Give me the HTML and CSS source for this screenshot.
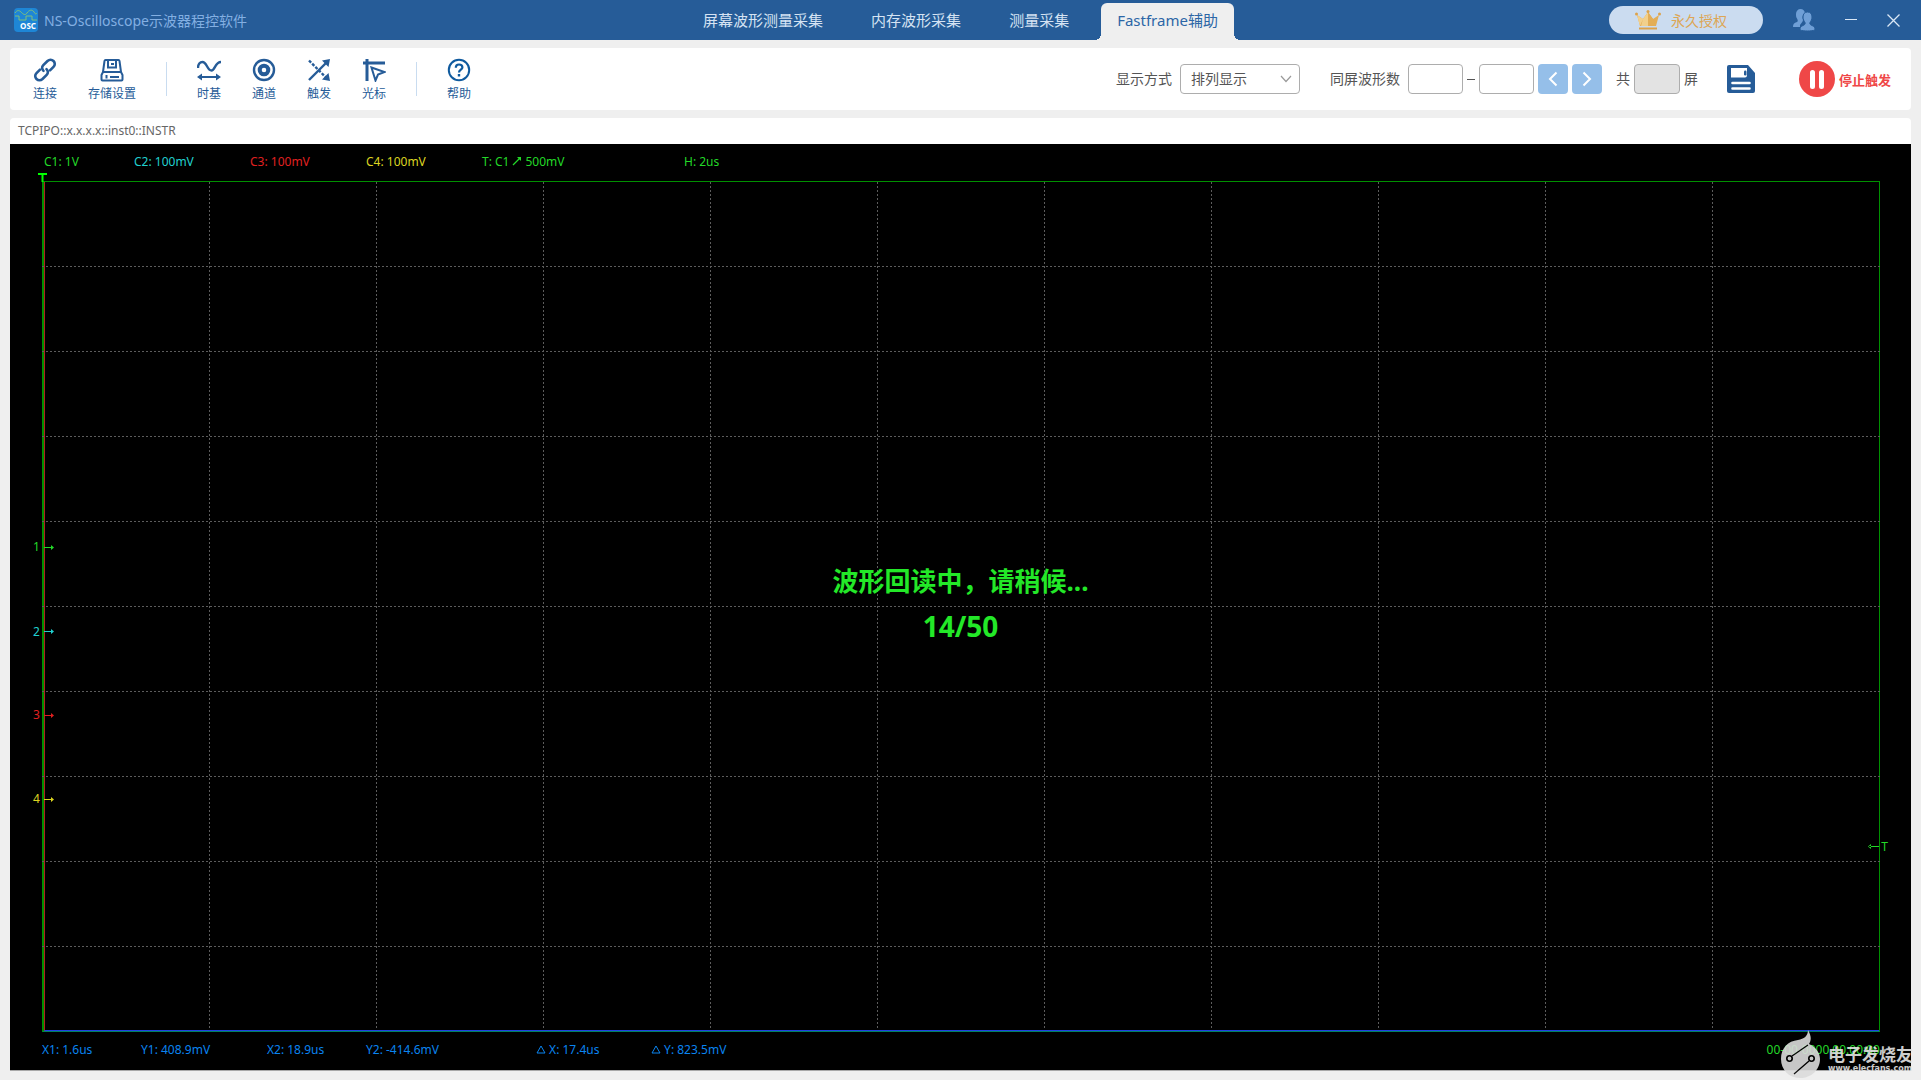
FILE: index.html
```html
<!DOCTYPE html>
<html lang="zh-CN">
	<head>
		<meta charset="UTF-8">
		<title>NS-Oscilloscope示波器程控软件</title>
		<link rel="stylesheet" href="styles.css">
	</head>
	<body>
		<!-- 顶部标题栏 -->
		<header class="top">
			<div class="brand">
				<svg class="logo" viewBox="0 0 24 24">
					<rect width="24" height="24" rx="4" fill="#1e86d6"/>
					<path d="M1 5C3 2 5 2 7 4S11 8 13 5S18 1 20 4S22 6 23 5" fill="none" stroke="#7fbf7a"/>
					<path d="M1 8H5V12H12V8H18V12H23" fill="none" stroke="#7fbf7a"/>
					<text x="14" y="21" class="logo-text">OSC</text>
				</svg>
				<span>NS-Oscilloscope示波器程控软件</span>
			</div>
			<nav class="tabs">
				<a href="#">屏幕波形测量采集</a>
				<a href="#">内存波形采集</a>
				<a href="#">测量采集</a>
				<a href="#" class="active">Fastframe辅助</a>
			</nav>
			<div class="win">
				<button class="license" type="button">
					<svg width="26" height="20" viewBox="0 0 26 20">
						<path d="M2 5L8 9L13 2L18 9L24 5L21 16H5Z" fill="#e3ae57"/>
						<path d="M2 5L8 9L5 16ZM13 2V16H6L8 9Z" fill="#f2d08c"/>
						<path d="M13 2L18 9L21 16H13Z" fill="#e3ae57"/>
						<circle cx="1.500" cy="4" r="1.500" fill="#dda24a"/>
						<circle cx="13" cy="1.500" r="1.500" fill="#dda24a"/>
						<circle cx="24.500" cy="4" r="1.500" fill="#dda24a"/>
						<path d="M4 18.500H22" stroke="#dda24a" stroke-width="2"/>
					</svg>
					<span>永久授权</span>
				</button>
				<button type="button" aria-label="用户">
					<svg width="22" height="22" viewBox="0 0 22 22" fill="#6f9fd6">
						<path d="M7.500 0C10 0 12 2 12 4.500C9.500 6 9 8 10 11C10 13 8 14 7 16V18H0C0 15 1 14 4 13C5 12.500 5 11.500 4 9.500C3 8 3 7 3 5C3 2 5 0 7.500 0Z"/>
						<path d="M14.500 3C17.500 3 19 5 19 8C19 10.500 18 12 17 13.500C16.500 15 17 15.500 19 16.500C21.500 17.500 22 18.500 22 21C19 22.300 10 22.300 7 21C7 18.500 7.500 17.500 10 16.500C12 15.500 12.500 15 12 13.500C11 12 10 10.500 10 8C10 5 11.500 3 14.500 3Z" stroke="#265c98"/>
					</svg>
				</button>
				<button type="button" aria-label="最小化">
					<svg width="12" height="12" viewBox="0 0 12 12"><path d="M0 5.500H12" stroke="#dbe8f6"/></svg>
				</button>
				<button type="button" aria-label="关闭">
					<svg width="13" height="13" viewBox="0 0 13 13"><path d="M.5 .5L12.500 12.500M12.500 .5L.5 12.500" stroke="#dbe8f6" stroke-width="1.300"/></svg>
				</button>
			</div>
		</header>

		<!-- 工具栏 -->
		<section class="toolbar">
			<div class="tools">
				<button class="tool" type="button">
					<svg viewBox="0 0 24 24" fill="none" stroke="#265c98" stroke-width="2.600" stroke-linecap="round">
						<path d="M10.500 12.800C8.700 11 8.700 8.800 10.300 7.200L14.500 3C16.300 1.300 18.800 1.300 20.500 3C22.200 4.700 22.200 7.200 20.500 8.900L17 12.400"/>
						<path d="M13.500 11.200C15.300 13 15.300 15.200 13.700 16.800L9.500 21C7.700 22.700 5.200 22.700 3.500 21C1.800 19.300 1.800 16.800 3.500 15.100L7 11.600"/>
					</svg>
					<span>连接</span>
				</button>
				<button class="tool" type="button">
					<svg viewBox="0 0 24 24" fill="none" stroke="#265c98" stroke-width="2">
						<path d="M3 14L4.500 3Q4.700 2 5.500 2H18.500Q19.300 2 19.500 3L21 14"/>
						<path d="M8 2V9.500H16V2M11 6H14"/>
						<path d="M3 14H21L22.500 17V21.500Q22.500 22.500 21.500 22.500H2.500Q1.500 22.500 1.500 21.500V17Z"/>
						<path d="M6.500 17V20.500M10 19H19"/>
					</svg>
					<span>存储设置</span>
				</button>
				<i class="line"></i>
				<button class="tool" type="button">
					<svg viewBox="0 0 24 24" fill="none" stroke="#265c98" stroke-width="2.400">
						<path d="M1 10C1 6 3 4 5.500 4C10 4 10 12.500 14.500 12.500C18 12.500 18 4 24 4"/>
						<path d="M3 19H21" stroke-width="2"/>
						<path d="M5 15.500V22.500L0 19ZM19 15.500V22.500L24 19Z" fill="#265c98" stroke="none"/>
					</svg>
					<span>时基</span>
				</button>
				<button class="tool" type="button">
					<svg viewBox="0 0 24 24" fill="none" stroke="#265c98">
						<circle cx="12" cy="12" r="10" stroke-width="2.400"/>
						<circle cx="12" cy="12" r="4.300" stroke-width="4"/>
					</svg>
					<span>通道</span>
				</button>
				<button class="tool" type="button">
					<svg viewBox="0 0 24 24" fill="none" stroke="#265c98" stroke-width="2.400">
						<path d="M2 22L19 5"/>
						<path d="M2 2.500L19 19.500" stroke-dasharray="3 1.500"/>
						<path d="M23 1L21.500 9L15 2.500ZM23 23L21.500 15L15 21.500Z" fill="#265c98" stroke="none"/>
					</svg>
					<span>触发</span>
				</button>
				<button class="tool" type="button">
					<svg viewBox="0 0 24 24" fill="none" stroke="#265c98">
						<path d="M5 1V23M1 5H23" stroke-width="3"/>
						<path d="M9.500 9.500L22.500 14L16 16.500L13.500 22.500Z" stroke-width="2"/>
					</svg>
					<span>光标</span>
				</button>
				<i class="line"></i>
				<button class="tool" type="button">
					<svg viewBox="0 0 24 24" fill="none" stroke="#0f5a9e">
						<circle cx="12" cy="12" r="10.200" stroke-width="2"/>
						<path d="M8.800 9.800C8.800 7.500 10 6.500 12 6.500S15.400 7.700 15.400 9.500C15.400 11.500 12 12 12 14.500" stroke-width="2.200"/>
						<path d="M12 16V18.500" stroke-width="2.400"/>
					</svg>
					<span>帮助</span>
				</button>
			</div>
			<form class="filter">
				<label for="mode">显示方式</label>
				<span class="select">
					<select id="mode"><option>排列显示</option></select>
					<svg width="12" height="8" viewBox="0 0 12 8"><path d="M1 1L6 6.500L11 1" fill="none" stroke="#9a9a9a" stroke-width="1.200"/></svg>
				</span>
				<label for="from" class="second">同屏波形数</label>
				<input id="from" class="num" type="text">
				<i class="dash"></i>
				<input class="num" type="text" aria-label="结束波形">
				<button class="page" type="button" aria-label="上一屏">
					<svg width="10" height="16" viewBox="0 0 10 16"><path d="M8.500 1.500L2 8L8.500 14.500" fill="none" stroke="#fff" stroke-width="2"/></svg>
				</button>
				<button class="page" type="button" aria-label="下一屏">
					<svg width="10" height="16" viewBox="0 0 10 16"><path d="M1.500 1.500L8 8L1.500 14.500" fill="none" stroke="#fff" stroke-width="2"/></svg>
				</button>
				<label for="total" class="total-label">共</label>
				<input id="total" class="num total" type="text" disabled>
				<label for="total">屏</label>
				<button class="save" type="button" aria-label="保存">
					<svg width="28" height="28" viewBox="0 0 28 28">
						<path d="M2 0H21L28 8V26Q28 28 26 28H2Q0 28 0 26V2Q0 0 2 0Z" fill="#265c98"/>
						<path d="M4 3H20V10Q20 12.500 18 12.500H4Z" fill="#fff"/>
						<rect x="17" y="5.500" width="2.500" height="5" rx="1.200" fill="#265c98"/>
						<path d="M5.500 18H22.500M5.500 23.500H22.500" stroke="#fff" stroke-width="2.600" stroke-linecap="round"/>
					</svg>
				</button>
				<button class="stop" type="button">
					<svg width="36" height="36" viewBox="0 0 36 36">
						<circle cx="18" cy="18" r="18" fill="#ef4747"/>
						<path d="M13.500 11.500V25.500M22.500 11.500V25.500" stroke="#fff" stroke-width="5" stroke-linecap="round"/>
					</svg>
					<span>停止触发</span>
				</button>
			</form>
		</section>

		<!-- 波形显示区 -->
		<main class="panel">
			<h1 class="addr">TCPIPO::x.x.x.x::inst0::INSTR</h1>
			<div class="screen">
				<div class="readout">
					<span class="c1">C1: 1V</span>
					<span class="c2">C2: 100mV</span>
					<span class="c3">C3: 100mV</span>
					<span class="c4">C4: 100mV</span>
					<span class="c1">T: C1<svg class="edge" width="10" height="10" viewBox="0 0 10 10"><path d="M1 9L8 2" stroke="#23d828" stroke-width="1.200"/><path d="M5 1H9V5Z" fill="#23d828"/></svg>500mV</span>
					<span class="c1">H: 2us</span>
				</div>
				<div class="plot">
					<svg class="grid">
						<line x1="9.09%" x2="9.09%" y2="100%"/>
						<line x1="18.18%" x2="18.18%" y2="100%"/>
						<line x1="27.27%" x2="27.27%" y2="100%"/>
						<line x1="36.36%" x2="36.36%" y2="100%"/>
						<line x1="45.45%" x2="45.45%" y2="100%"/>
						<line x1="54.54%" x2="54.54%" y2="100%"/>
						<line x1="63.63%" x2="63.63%" y2="100%"/>
						<line x1="72.72%" x2="72.72%" y2="100%"/>
						<line x1="81.81%" x2="81.81%" y2="100%"/>
						<line x1="90.9%" x2="90.9%" y2="100%"/>
						<line y1="10%" y2="10%" x2="100%"/>
						<line y1="20%" y2="20%" x2="100%"/>
						<line y1="30%" y2="30%" x2="100%"/>
						<line y1="40%" y2="40%" x2="100%"/>
						<line y1="50%" y2="50%" x2="100%"/>
						<line y1="60%" y2="60%" x2="100%"/>
						<line y1="70%" y2="70%" x2="100%"/>
						<line y1="80%" y2="80%" x2="100%"/>
						<line y1="90%" y2="90%" x2="100%"/>
					</svg>
					<svg class="trig" width="9" height="9" viewBox="0 0 9 9"><path d="M0 1H9M4.500 1V9" stroke="#00ff00" stroke-width="2"/></svg>
					<span class="mark m1 c1">1<svg width="10" height="5" viewBox="0 0 10 5"><path d="M0 2H9V3H0ZM7 0L10 2.500L7 5Z" fill="currentColor"/></svg></span>
					<span class="mark m2 c2">2<svg width="10" height="5" viewBox="0 0 10 5"><path d="M0 2H9V3H0ZM7 0L10 2.500L7 5Z" fill="currentColor"/></svg></span>
					<span class="mark m3 c3">3<svg width="10" height="5" viewBox="0 0 10 5"><path d="M0 2H9V3H0ZM7 0L10 2.500L7 5Z" fill="currentColor"/></svg></span>
					<span class="mark m4 c4">4<svg width="10" height="5" viewBox="0 0 10 5"><path d="M0 2H9V3H0ZM7 0L10 2.500L7 5Z" fill="currentColor"/></svg></span>
					<span class="mark mt c1"><svg width="11" height="5" viewBox="0 0 11 5"><path d="M1 2H11V3H1ZM3 0L0 2.500L3 5Z" fill="currentColor"/></svg>T</span>
					<div class="tip">
						<p>波形回读中，请稍候...</p>
						<p class="count">14/50</p>
					</div>
				</div>
				<div class="measure">
					<span>X1: 1.6us</span>
					<span>Y1: 408.9mV</span>
					<span>X2: 18.9us</span>
					<span>Y2: -414.6mV</span>
					<span><svg class="delta" width="10" height="9" viewBox="0 0 10 9"><path d="M5 1L9 8H1Z" fill="none" stroke="currentColor"/></svg> X: 17.4us</span>
					<span><svg class="delta" width="10" height="9" viewBox="0 0 10 9"><path d="M5 1L9 8H1Z" fill="none" stroke="currentColor"/></svg> Y: 823.5mV</span>
					<time class="c1">00-00-0000 00:00:00</time>
				</div>
			</div>
		</main>

		<div class="watermark">
			<svg width="40" height="48" viewBox="0 0 40 48">
				<path d="M27 0C31 7 30 11 28 14C35 17 39 23 39 29C39 40 30 48 19.500 48C8 48 0 40 0 29C0 18 7 11 17 10C23 9 27 6 27 0Z" fill="#dcdcdc"/>
				<path d="M11 26L27 15M28 31L13 44" stroke="#000" stroke-width="1.300"/>
				<circle cx="8.500" cy="28.500" r="2.700" fill="none" stroke="#000" stroke-width="1.600"/>
				<circle cx="30.500" cy="28.500" r="2.700" fill="none" stroke="#000" stroke-width="1.600"/>
			</svg>
			<div>
				<b>电子发烧友</b>
				<small>www.elecfans.com</small>
			</div>
		</div>
	</body>
</html>
```
FILE: styles.css
```css
*{
	margin: 0;
	padding: 0;
	box-sizing: border-box;
}
body{
	display: flex;
	flex-direction: column;
	min-height: 100vh;
	background: #efefef;
	font-family: "Noto Sans","Noto Sans CJK SC",sans-serif;
	font-size: 14px;
	color: #555;
}
button,input,select{
	font: inherit;
	color: inherit;
	border: none;
	background: none;
}
button{
	cursor: pointer;
}
a{
	text-decoration: none;
}
svg{
	display: block;
	flex: none;
}
/*标题栏*/
.top{
	display: grid;
	grid-template-columns: 1fr auto 1fr;
	height: 40px;
	background: #265c98;
}
.brand{
	display: flex;
	align-items: center;
	gap: 6px;
	padding-left: 14px;
	color: #83afe2;
}
.logo{
	width: 24px;
	height: 24px;
}
.logo-text{
	font-size: 8px;
	font-weight: bold;
	fill: #fff;
	text-anchor: middle;
}
.tabs{
	display: flex;
	align-items: flex-end;
	gap: 16px;
}
.tabs a{
	height: 37px;
	line-height: 34px;
	padding: 0 16px;
	font-size: 15px;
	color: #d5e3f3;
}
.tabs .active{
	position: relative;
	background: #efefef;
	color: #2c66a6;
	border-radius: 6px 6px 0 0;
}
.active::before,.active::after{
	content: "";
	position: absolute;
	bottom: 0;
	width: 6px;
	height: 6px;
}
.active::before{
	right: 100%;
	background: radial-gradient(circle at 0 0,#265c98 6px,#efefef 6px);
}
.active::after{
	left: 100%;
	background: radial-gradient(circle at 100% 0,#265c98 6px,#efefef 6px);
}
.win{
	display: flex;
	align-items: center;
	justify-content: flex-end;
	gap: 30px;
	padding-right: 21px;
}
.license{
	display: flex;
	align-items: center;
	justify-content: center;
	gap: 10px;
	width: 154px;
	height: 28px;
	padding-right: 10px;
	border-radius: 14px;
	background: #cbdcf0;
	color: #dda655;
}
/*工具栏*/
.toolbar{
	display: flex;
	align-items: center;
	justify-content: space-between;
	height: 62px;
	margin: 8px 10px;
	padding: 0 20px 0 23px;
	background: #fff;
	border-radius: 4px;
}
.tools{
	display: flex;
	align-items: center;
	gap: 31px;
}
.tool{
	display: flex;
	flex-direction: column;
	align-items: center;
	gap: 3px;
	padding-top: 2px;
	font-size: 12px;
	line-height: 18px;
	color: #265c98;
}
.tool svg{
	width: 24px;
	height: 24px;
}
.line{
	width: 1px;
	height: 34px;
	margin: 0 -1px;
	background: #c9dcf0;
}
.filter{
	display: flex;
	align-items: center;
	gap: 4px;
}
.filter label{
	padding-bottom: 2px;
}
.select{
	position: relative;
	margin-left: 4px;
}
.select select{
	display: block;
	appearance: none;
	width: 120px;
	height: 30px;
	padding: 0 10px 2px;
	border: 1px solid #adadad;
	border-radius: 4px;
}
.select svg{
	position: absolute;
	right: 8px;
	top: 11px;
	pointer-events: none;
}
.second{
	margin: 0 4px 0 26px;
}
.num{
	width: 55px;
	height: 30px;
	padding: 0 6px;
	border: 1px solid #adadad;
	border-radius: 4px;
}
.dash{
	width: 8px;
	height: 1px;
	background: #555;
}
.page{
	display: flex;
	align-items: center;
	justify-content: center;
	width: 30px;
	height: 30px;
	border-radius: 4px;
	background: #95bfe9;
}
.total-label{
	margin-left: 10px;
}
.total{
	width: 46px;
	background: #e3e3e3;
}
.save{
	margin: 0 40px 0 25px;
}
.stop{
	display: flex;
	align-items: center;
	gap: 4px;
	font-size: 13px;
	font-weight: bold;
	color: #ef4747;
}
/*波形区*/
.panel{
	flex: 1;
	display: flex;
	flex-direction: column;
	margin: 0 10px 9px;
	border-bottom: 1px solid #a8a8a8;
}
.addr{
	height: 26px;
	line-height: 26px;
	padding-left: 8px;
	border-radius: 4px 4px 0 0;
	background: #fff;
	font-size: 12px;
	font-weight: normal;
	color: #666;
}
.screen{
	flex: 1;
	display: flex;
	flex-direction: column;
	padding: 0 31px 0 32px;
	background: #000;
	font-size: 12px;
}
.readout{
	display: grid;
	grid-template-columns: 90px 116px 116px 116px 202px auto;
	padding: 0 0 2px 2px;
	line-height: 35px;
}
.edge{
	display: inline-block;
	margin: 0 3px;
}
.c1{
	color: #23d828;
}
.c2{
	color: #20d0d0;
}
.c3{
	color: #e02020;
}
.c4{
	color: #dcd420;
}
.plot{
	flex: 1;
	position: relative;
	z-index: 0;
	border: 1px solid #009000;
	border-left-width: 2px;
	border-bottom-color: #008060;
}
.plot::before{
	content: "";
	position: absolute;
	inset: 0;
	border-left: 1px solid #b02020;
	border-bottom: 1px solid #2040e0;
}
/*网格从边框外沿开始算*/
.grid{
	position: absolute;
	top: 0;
	left: -2px;
	width: calc(100% + 3px);
	height: 100%;
	z-index: -1;
}
.grid line{
	stroke: #5c5c5c;
	stroke-dasharray: 2 2;
	shape-rendering: crispEdges;
}
.trig{
	position: absolute;
	left: -6px;
	bottom: 100%;
}
.mark{
	position: absolute;
	display: flex;
	align-items: center;
	gap: 4px;
	left: -11px;
	height: 16px;
	margin-top: -8px;
	line-height: 16px;
}
.m1{
	top: 43%;
}
.m2{
	top: 53%;
}
.m3{
	top: 62.8%;
}
.m4{
	top: 72.7%;
}
.mt{
	top: 78.3%;
	left: auto;
	right: -9px;
	gap: 2px;
}
.tip{
	position: absolute;
	inset: 0;
	display: flex;
	flex-direction: column;
	align-items: center;
	justify-content: center;
	padding: 0 2px 6px 0;
	font-size: 26px;
	font-weight: bold;
	line-height: 45px;
	color: #23e828;
}
.count{
	font-size: 28px;
}
.measure{
	display: grid;
	grid-template-columns: 99px 126px 99px 170px 115px 1fr auto;
	padding-bottom: 2px;
	line-height: 36px;
	color: #0a84f0;
}
.delta{
	display: inline-block;
}
/*水印*/
.watermark{
	position: absolute;
	right: 8px;
	bottom: 2px;
	display: flex;
	align-items: flex-end;
	gap: 7px;
	color: #e4e4e4;
	opacity: .9;
}
.watermark div{
	padding-bottom: 4px;
}
.watermark b{
	display: block;
	font-size: 17px;
	line-height: 18px;
}
.watermark small{
	display: block;
	font-family: "DejaVu Sans",sans-serif;
	font-size: 8px;
	font-weight: bold;
	line-height: 10px;
}
```
